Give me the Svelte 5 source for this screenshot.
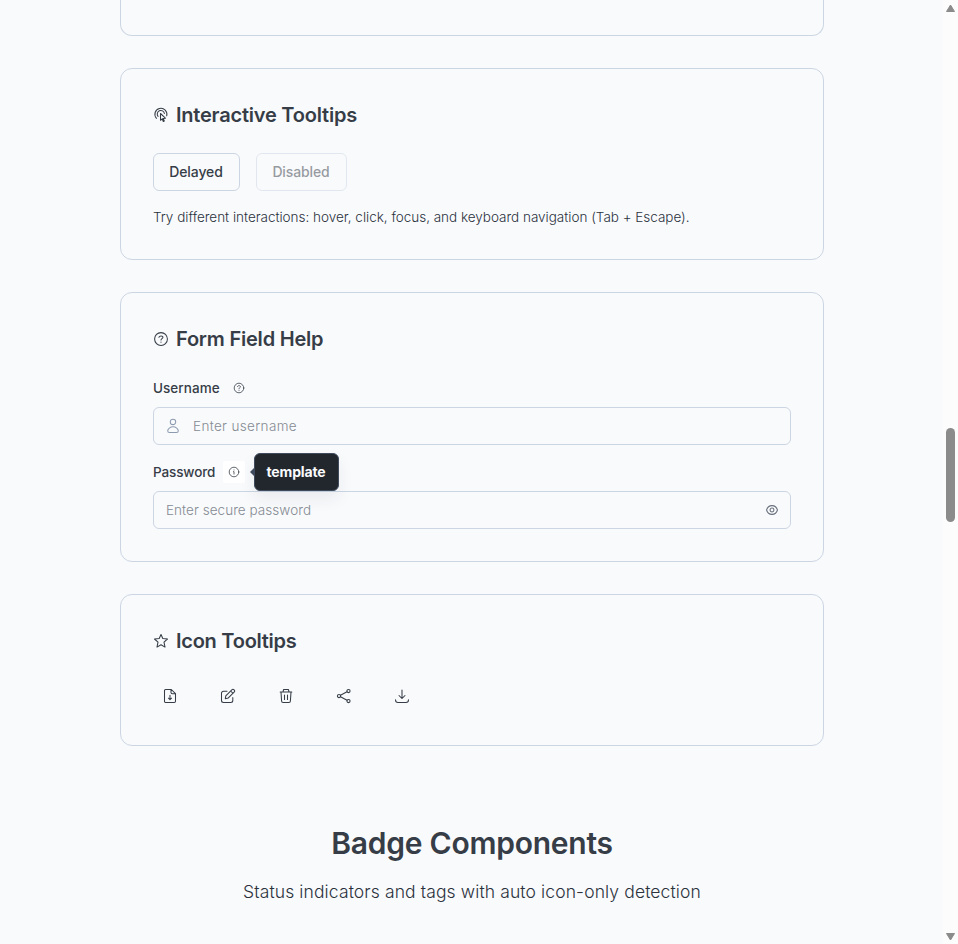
<script>
  const actions = ['export', 'edit', 'delete', 'share', 'download'];
</script>

{#snippet icon(name, size = 16)}
  <svg width={size} height={size} viewBox="0 0 16 16" fill="none" stroke="currentColor" stroke-width="1.05" stroke-linecap="round" stroke-linejoin="round" aria-hidden="true">
    {#if name === 'touch'}
      <path d="M3.500 11.300A6 6 0 1 1 13.700 8.800M5.100 9.400A3.600 3.600 0 1 1 11.400 6.500" />
      <path d="M7.500 6.500v6.800l1.700-1.500 1.100 2.700 1-.5-1.100-2.500 2.200-.3z" />
    {:else if name === 'help'}
      <circle cx="8" cy="8" r="6.400" />
      <path d="M5.900 6.200C6.400 5.200 7.100 4.900 8 4.900c1.300 0 2.100.7 1.900 1.600C9.700 7.600 8 7.700 8 9M8 11.100v.1" />
    {:else if name === 'info'}
      <circle cx="8" cy="8" r="6.400" />
      <path d="M7.300 7.500H8V10.800M8 5.200v.1" />
    {:else if name === 'user'}
      <circle cx="8" cy="3.900" r="2.700" />
      <path d="M8 8.800c2.700 0 5.300 2 5.300 4 0 1.100-.9 1.700-1.800 1.700h-7c-.9 0-1.800-.6-1.800-1.700 0-2 2.600-4 5.300-4z" />
    {:else if name === 'eye'}
      <path stroke-width="1.200" d="M1.800 8C2.600 5 5 3 8 3S13.400 5 14.200 8C13.400 11 11 13 8 13S2.600 11 1.800 8z" />
      <circle stroke-width="1.200" cx="8" cy="8" r="2.200" />
    {:else if name === 'star'}
      <path d="M8 1.500l1.800 4 4.700.500-3.500 3.200 1 4.900L8 11.800l-4 2.300 1-4.900L1.500 6l4.700-.5z" />
    {:else if name === 'export'}
      <path d="M3.500 1.500h5.800l4.200 4.200v7.500a1.300 1.300 0 0 1-1.300 1.300H3.500a1 1 0 0 1-1-1v-11a1 1 0 0 1 1-1zM9 1.500v3a1.300 1.300 0 0 0 1.300 1.300h3.200M8 7.200v4.300M6.500 10.200L8 11.700l1.500-1.500" />
    {:else if name === 'edit'}
      <path d="M7 3.200H3.500a2 2 0 0 0-2 2v7.300a2 2 0 0 0 2 2h7.300a2 2 0 0 0 2-2V9.500M5.300 10.700l.5-2.900 6-6a1.600 1.600 0 0 1 2.300 2.300l-6 6zM10.700 3l2.300 2.300" />
    {:else if name === 'delete'}
      <path d="M2.200 4h11.600M3 4l.6 9a1.500 1.500 0 0 0 1.500 1.500h5.800a1.500 1.500 0 0 0 1.500-1.500L13 4M5 3.800l.6-2.300h4.800l.6 2.300M6.500 7v4.500M9.500 7v4.500" />
    {:else if name === 'share'}
      <circle cx="3" cy="8" r="1.600" />
      <circle cx="12.500" cy="3" r="1.600" />
      <circle cx="12.500" cy="13" r="1.600" />
      <path d="M4.500 7.200l6.500-3.400M4.500 8.800l6.500 3.400" />
    {:else if name === 'download'}
      <path d="M8 2v8.300M5 7.500l3 3 3-3M1.500 11.800c0 1.900.6 2.700 2.500 2.700h8c1.900 0 2.500-.8 2.500-2.700" />
    {/if}
  </svg>
{/snippet}

<div class="window">
  <main>
    <section class="card previous"></section>

    <section class="card">
      <h3>{@render icon('touch')}<span class="t1">Interactive Tooltips</span></h3>
      <div class="buttons">
        <button class="outline b1">Delayed</button>
        <button class="outline b2" disabled>Disabled</button>
      </div>
      <p class="hint">Try different interactions: hover, click, focus, and keyboard navigation (Tab + Escape).</p>
    </section>

    <section class="card">
      <h3>{@render icon('help')}<span class="t2">Form Field Help</span></h3>
      <div class="label"><label class="l1" for="username">Username</label><button class="mini" aria-label="Help">{@render icon('help', 12)}</button></div>
      <div class="field user">
        {@render icon('user')}
        <input class="i1" id="username" placeholder="Enter username" />
      </div>
      <div class="label second">
        <label class="l2" for="password">Password</label>
        <button class="mini active" aria-label="Info">{@render icon('info', 12)}<span class="tooltip"><strong>template</strong></span></button>
      </div>
      <div class="field pass">
        <input class="i2" id="password" type="password" placeholder="Enter secure password" />
        {@render icon('eye', 14)}
      </div>
    </section>

    <section class="card">
      <h3>{@render icon('star')}<span class="t3">Icon Tooltips</span></h3>
      <div class="actions">
        {#each actions as action}
          <button aria-label={action}>{@render icon(action)}</button>
        {/each}
      </div>
    </section>

    <header>
      <h2>Badge Components</h2>
      <p>Status indicators and tags with auto icon-only detection</p>
    </header>
  </main>
  <aside>
    <svg width="15" height="15" viewBox="0 0 15 15"><path d="M7.500 5L11.500 11.500h-8z" fill="#8b8b8b" stroke="#8b8b8b" stroke-linejoin="round" /></svg>
    <div class="thumb"></div>
    <svg width="15" height="15" viewBox="0 0 15 15"><path d="M7.500 11L3.500 4.500h8z" fill="#8b8b8b" stroke="#8b8b8b" stroke-linejoin="round" /></svg>
  </aside>
</div>

<style>
  :global(body) { margin: 0; overflow: hidden; }
  * { box-sizing: border-box; }
  .window {
    display: flex;
    width: 958px;
    height: 944px;
    overflow: hidden;
    background: #f9fafc;
    color: #363d47;
    font-family: Inter, "Liberation Sans", sans-serif;
  }
  main { width: 943px; padding: 0 119px 0 120px; }
  svg { flex: none; display: block; }
  .card { border: 1px solid #ccd6e3; border-radius: 12px; padding: 32px; margin-bottom: 32px; }
  .previous { height: 36px; padding: 0; border-top: 0; border-radius: 0 0 12px 12px; }
  h3 { display: flex; align-items: center; gap: 7px; height: 28px; margin: 0 0 24px; font-size: 20px; font-weight: 600; line-height: 28px; letter-spacing: -0.21px; white-space: nowrap; }
  .t3 { letter-spacing: -0.26px; }
  button { padding: 0; border: 0; background: none; color: inherit; font-family: inherit; }
  .buttons { display: flex; gap: 16px; }
  .outline { height: 38px; padding: 0 1px 2px 0; border: 1px solid #ccd6e3; border-radius: 6px; font-size: 14px; font-weight: 500; letter-spacing: -0.12px; white-space: nowrap; }
  .outline:disabled { opacity: 0.5; }
  .b1 { width: 87px; }
  .b2 { width: 91px; }
  .hint { margin: 16px 0 0; color: #2b323c; font-size: 13.5px; font-weight: 300; line-height: 20px; letter-spacing: -0.013px; white-space: nowrap; }
  .label { display: flex; align-items: center; gap: 8px; height: 22px; margin-bottom: 8px; font-size: 13.5px; font-weight: 500; }
  .label label { padding-bottom: 1px; }
  .second { margin-top: 16px; }
  .mini { position: relative; display: flex; align-items: center; justify-content: center; width: 22px; height: 22px; border-radius: 2px; }
  .l1 { width: 67px; letter-spacing: 0.05px; }
  .l2 { width: 62px; letter-spacing: -0.12px; }
  .active { background: #fff; }
  .tooltip {
    position: absolute;
    left: 31px;
    top: -8px;
    display: flex;
    align-items: center;
    justify-content: center;
    width: 85px;
    height: 38px;
    padding: 0 1px 2px 0;
    border: 1px solid #3f4b5c;
    border-radius: 6px;
    background: #22272e;
    color: #f9fafc;
    font-size: 14px;
    letter-spacing: -0.13px;
    box-shadow: 0 8px 16px rgba(30, 40, 60, 0.07);
  }
  .tooltip::before { content: ""; position: absolute; left: -5px; top: 13px; border: 5px solid transparent; border-left: 0; border-right-color: #3f4b5c; }
  .field { display: flex; align-items: center; height: 38px; border: 1px solid #ccd6e3; border-radius: 6px; }
  .user { gap: 12px; padding: 0 12px 0 11px; color: #8d9bb0; }
  .pass { padding: 0 11px 0 12px; color: #69717d; }
  input { flex: 1; min-width: 0; height: 34px; padding: 0; border: 0; outline: 0; background: none; font: 300 13.5px Inter, "Liberation Sans", sans-serif; }
  .i1 { letter-spacing: 0.35px; }
  .i2 { letter-spacing: 0.05px; }
  input::placeholder { color: #858b93; opacity: 1; }
  .actions { display: flex; gap: 24px; }
  .actions button { display: flex; align-items: center; justify-content: center; width: 34px; height: 34px; }
  header { padding-top: 45px; text-align: center; white-space: nowrap; }
  h2 { margin: 0; font-size: 30px; font-weight: 600; line-height: 40px; letter-spacing: -0.25px; }
  header p { margin: 15px 0 0; color: #2b323c; font-size: 17.5px; font-weight: 300; line-height: 28px; letter-spacing: 0.12px; }
  aside { display: flex; flex-direction: column; justify-content: space-between; width: 15px; background: #fcfcfc; }
  .thumb { width: 9px; height: 94px; margin: 6px 0 0 3px; border-radius: 5px; background: #8b8b8b; }
</style>
